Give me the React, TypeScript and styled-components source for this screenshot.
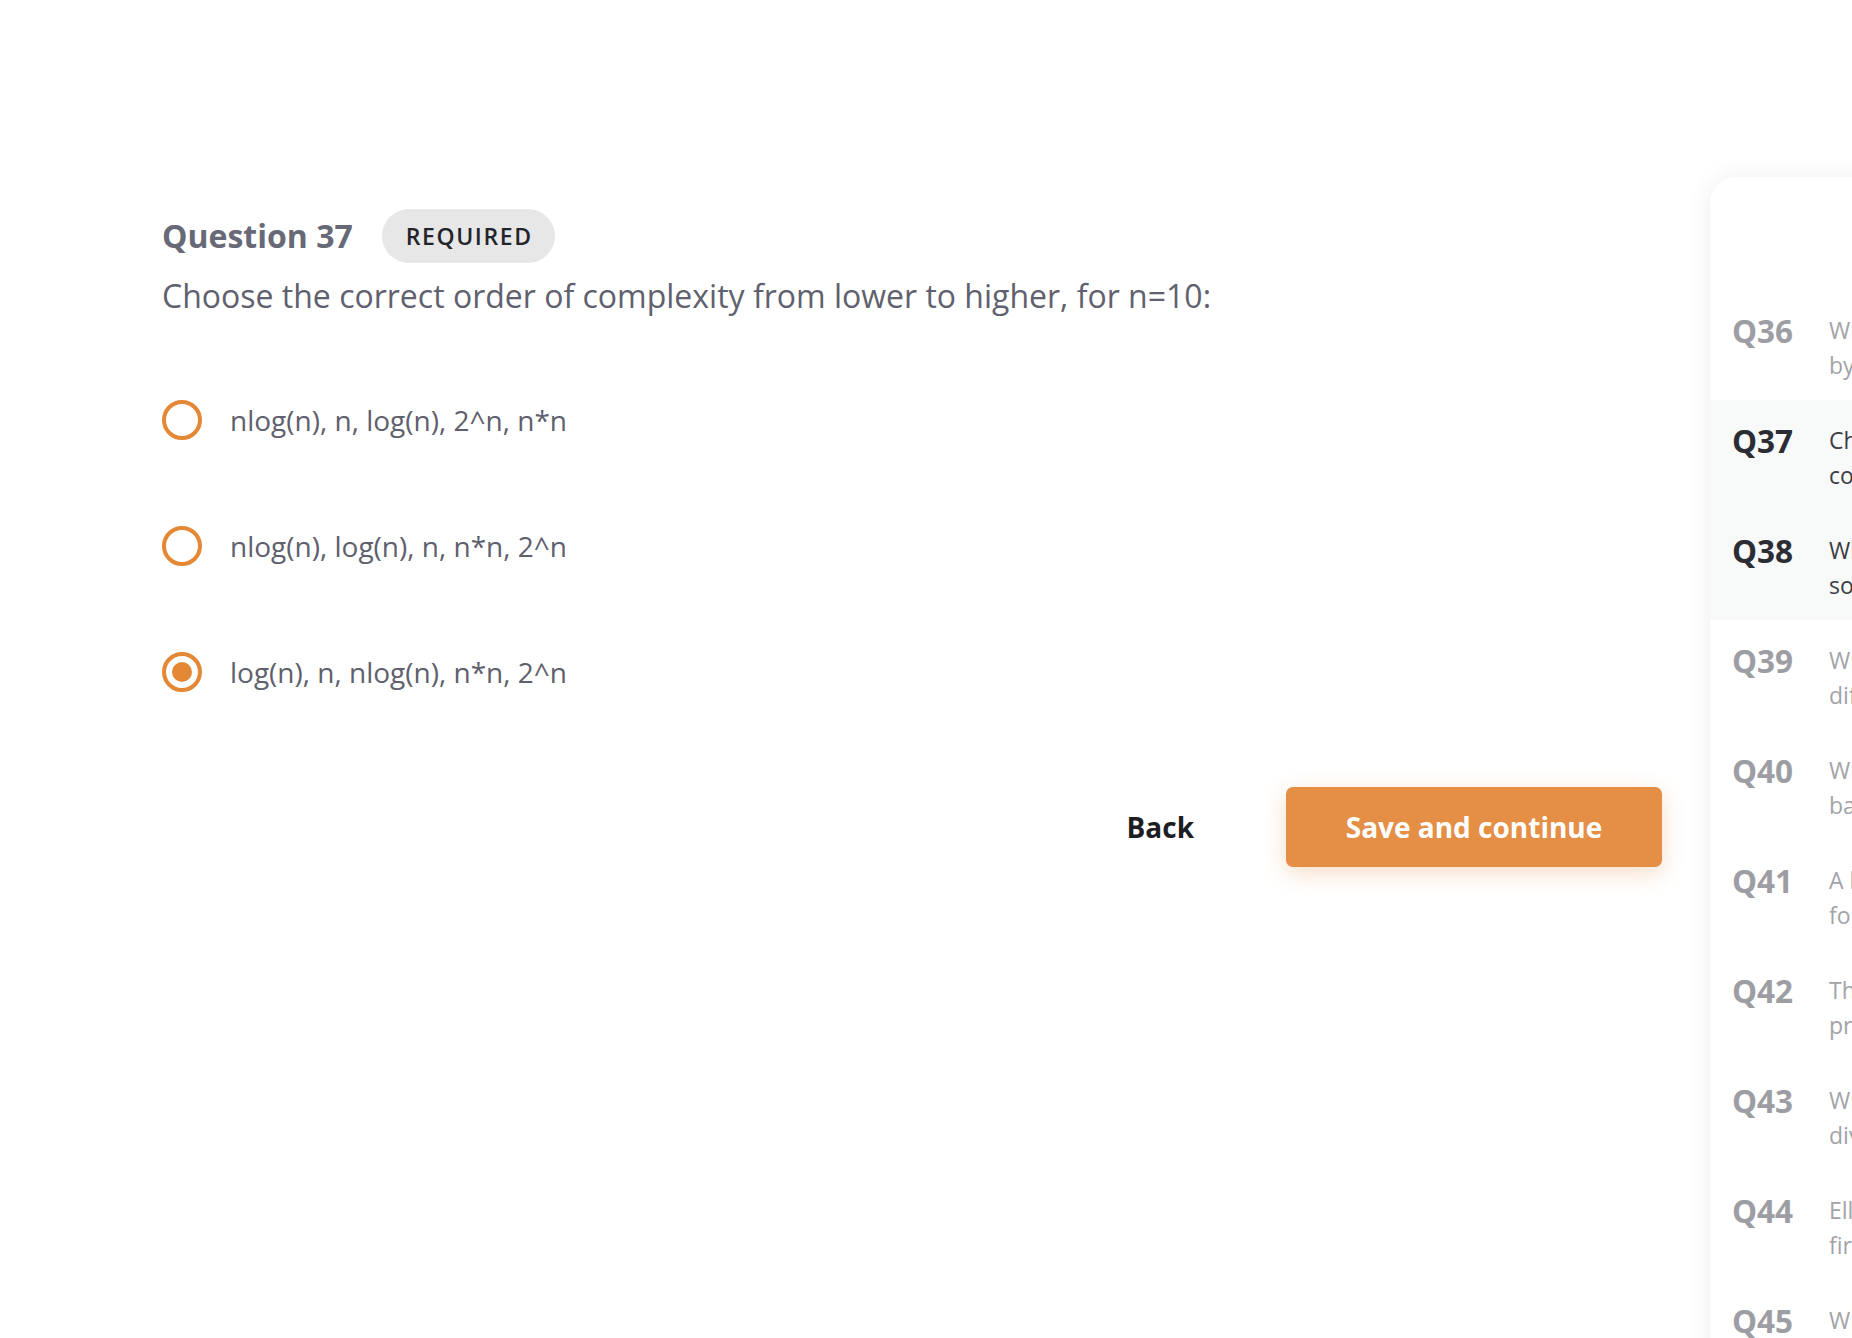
import React, { useState } from "react";
import styled, { createGlobalStyle } from "styled-components";

const GlobalStyle = createGlobalStyle`
  html, body {
    margin: 0;
    padding: 0;
    background: #ffffff;
  }
  body {
    font-family: "Open Sans", "Noto Sans", sans-serif;
    -webkit-font-smoothing: antialiased;
  }
  * { box-sizing: border-box; }
`;

const Page = styled.div`
  display: flex;
  align-items: flex-start;
  width: 100vw;
  height: 1338px;
  overflow: hidden;
  padding-left: 162px;
  gap: 48px;
`;

const Main = styled.main`
  flex: 0 0 1500px;
  display: flex;
  flex-direction: column;
  padding-top: 209px;
`;

const HeaderRow = styled.div`
  display: flex;
  align-items: center;
  gap: 29px;
  height: 54px;
`;

const Heading = styled.h2`
  margin: 0;
  font-size: 32px;
  font-weight: 700;
  color: #676976;
  line-height: 40px;
`;

const Badge = styled.span`
  display: inline-flex;
  align-items: center;
  height: 54px;
  padding: 0 22px 0 24px;
  border-radius: 27px;
  background: #e7e7e8;
  color: #24252a;
  font-size: 23px;
  font-weight: 600;
  letter-spacing: 1.6px;
`;

const Prompt = styled.p`
  margin: 13px 0 0;
  font-size: 32px;
  line-height: 40px;
  color: #5f616e;
`;

const Options = styled.div`
  display: flex;
  flex-direction: column;
  gap: 86px;
  margin-top: 84px;
`;

const OptionRow = styled.label`
  display: flex;
  align-items: center;
  gap: 28px;
  height: 40px;
  cursor: pointer;
  font-size: 28px;
  color: #5e606d;
`;

const Radio = styled.span<{ $checked: boolean }>`
  flex: 0 0 40px;
  width: 40px;
  height: 40px;
  border-radius: 50%;
  border: 4px solid #e58835;
  display: flex;
  align-items: center;
  justify-content: center;
  &::after {
    content: "";
    width: 20px;
    height: 20px;
    border-radius: 50%;
    background: #e58835;
    display: ${(p) => (p.$checked ? "block" : "none")};
  }
`;

const Actions = styled.div`
  display: flex;
  justify-content: flex-end;
  align-items: center;
  gap: 56px;
  margin-top: 95px;
`;

const BackButton = styled.button`
  background: none;
  border: none;
  padding: 0 36px;
  height: 80px;
  font-family: inherit;
  font-size: 28px;
  font-weight: 700;
  color: #1d1e23;
  cursor: pointer;
`;

const SaveButton = styled.button`
  width: 376px;
  height: 80px;
  border: none;
  border-radius: 7px;
  background: #e58f46;
  color: #ffffff;
  font-family: inherit;
  font-size: 28px;
  font-weight: 700;
  cursor: pointer;
  box-shadow: 0 6px 22px rgba(229, 143, 70, 0.3);
`;

const Sidebar = styled.aside`
  flex: 0 0 520px;
  margin-top: 177px;
  min-height: 1300px;
  background: #ffffff;
  border-top-left-radius: 26px;
  box-shadow: 0 0 26px rgba(0, 0, 0, 0.07);
  padding-top: 113px;
  display: flex;
  flex-direction: column;
`;

const NavRow = styled.div<{ $active: boolean }>`
  display: grid;
  grid-template-columns: 72px 1fr;
  column-gap: 25px;
  align-items: start;
  height: 110px;
  padding: 23px 0 0 22px;
  background: ${(p) => (p.$active ? "#f8f9f9" : "transparent")};
`;

const NavLabel = styled.span<{ $active: boolean }>`
  font-size: 31.5px;
  font-weight: 700;
  line-height: 35px;
  color: ${(p) => (p.$active ? "#2c2d34" : "#9d9ea3")};
`;

const NavText = styled.span<{ $active: boolean }>`
  font-size: 23px;
  line-height: 35px;
  white-space: pre-line;
  color: ${(p) => (p.$active ? "#3b3c44" : "#a2a3a8")};
`;

const options = [
  "nlog(n), n, log(n), 2^n, n*n",
  "nlog(n), log(n), n, n*n, 2^n",
  "log(n), n, nlog(n), n*n, 2^n",
];

const questions = [
  { id: 36, text: "What is the value returned\nby the following function?" },
  { id: 37, text: "Choose the correct order of\ncomplexity from lower to higher" },
  { id: 38, text: "Which of the following\nsorting algorithms is stable?" },
  { id: 39, text: "What is the main\ndifference between a stack" },
  { id: 40, text: "Which data structure is\nbased on the LIFO principle?" },
  { id: 41, text: "A binary tree is a tree\nfor which each node has" },
  { id: 42, text: "The time complexity of this\nprogram is:" },
  { id: 43, text: "What is the worst case of the\ndivide and conquer algorithm?" },
  { id: 44, text: "Elliot wants to find the\nfirst element of the list" },
  { id: 45, text: "What is the output of\nthe following code?" },
];

export default function App() {
  const [selected, setSelected] = useState(2);
  return (
    <>
      <GlobalStyle />
      <Page>
        <Main>
          <HeaderRow>
            <Heading>Question 37</Heading>
            <Badge>REQUIRED</Badge>
          </HeaderRow>
          <Prompt>
            Choose the correct order of complexity from lower to higher, for n=10:
          </Prompt>
          <Options>
            {options.map((o, i) => (
              <OptionRow key={o} onClick={() => setSelected(i)}>
                <Radio $checked={selected === i} />
                {o}
              </OptionRow>
            ))}
          </Options>
          <Actions>
            <BackButton>Back</BackButton>
            <SaveButton>Save and continue</SaveButton>
          </Actions>
        </Main>
        <Sidebar>
          {questions.map((q) => {
            const active = q.id === 37 || q.id === 38;
            return (
              <NavRow key={q.id} $active={active}>
                <NavLabel $active={active}>Q{q.id}</NavLabel>
                <NavText $active={active}>{q.text}</NavText>
              </NavRow>
            );
          })}
        </Sidebar>
      </Page>
    </>
  );
}
